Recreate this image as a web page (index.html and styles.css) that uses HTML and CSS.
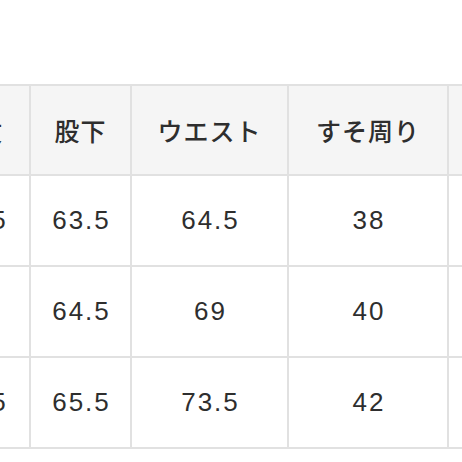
FILE: index.html
```html
<!DOCTYPE html>
<html lang="ja">
<head>
<meta charset="utf-8">
<link rel="stylesheet" href="styles.css">
</head>
<body>
<div class="viewport">
  <table class="size-table">
    <colgroup>
      <col class="c-a">
      <col class="c-b">
      <col class="c-c">
      <col class="c-d">
      <col class="c-e">
    </colgroup>
    <thead>
      <tr>
        <th>総丈</th>
        <th>股下</th>
        <th>ウエスト</th>
        <th>すそ周り</th>
        <th>わたり</th>
      </tr>
    </thead>
    <tbody>
      <tr>
        <td>93.5</td>
        <td>63.5</td>
        <td>64.5</td>
        <td>38</td>
        <td>30</td>
      </tr>
      <tr>
        <td>95</td>
        <td>64.5</td>
        <td>69</td>
        <td>40</td>
        <td>31</td>
      </tr>
      <tr>
        <td>96.5</td>
        <td>65.5</td>
        <td>73.5</td>
        <td>42</td>
        <td>32</td>
      </tr>
    </tbody>
  </table>
</div>
</body>
</html>
```
FILE: styles.css
```css
html, body {
  margin: 0;
  padding: 0;
  background: #ffffff;
}
.viewport {
  width: 462px;
  height: 462px;
  overflow: hidden;
  padding-top: 84px;
  box-sizing: border-box;
}
.size-table {
  margin-left: -76px;
  border-collapse: collapse;
  table-layout: fixed;
  width: 682px;
  font-family: "Noto Sans CJK JP", "Noto Sans", sans-serif;
  color: #2e2e2e;
  font-size: 25px;
  letter-spacing: 1px;
}
.c-a { width: 105px; }
.c-b { width: 101px; }
.c-c { width: 157px; }
.c-d { width: 160px; }
.c-e { width: 159px; }
.size-table th,
.size-table td {
  border: 2px solid #e1e1e1;
  text-align: center;
  vertical-align: middle;
  padding: 0;
  white-space: nowrap;
}
.size-table th {
  background: #f5f5f5;
  font-weight: 500;
  height: 88px;
}
.size-table td {
  background: #ffffff;
  font-family: "Liberation Sans", "Noto Sans CJK JP", sans-serif;
  font-size: 26px;
  letter-spacing: 2px;
  font-weight: 400;
  height: 89px;
  padding-left: 2px;
}
```
